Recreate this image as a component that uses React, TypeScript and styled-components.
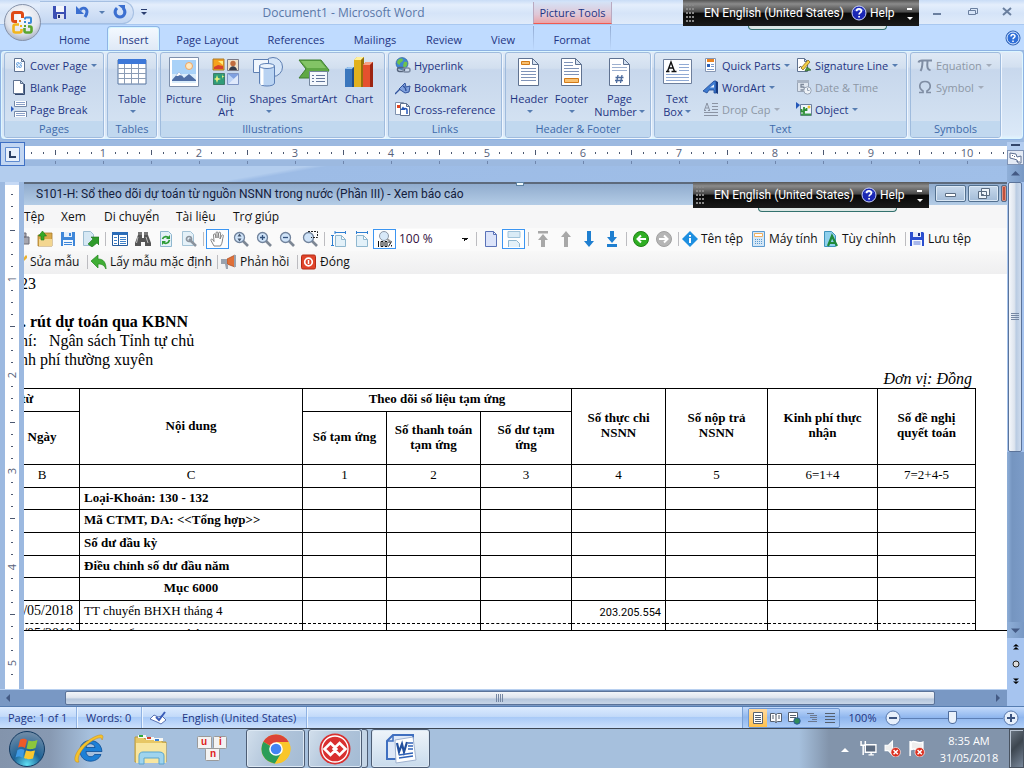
import React from "react";
import styled, { createGlobalStyle, css } from "styled-components";

const ui = `"Open Sans", "Noto Sans", sans-serif`;
const compact = `Roboto, "Open Sans", sans-serif`;
const serif = `"Liberation Serif", "Times New Roman", serif`;

const Global = createGlobalStyle`
  * { box-sizing: border-box; }
  body { margin: 0; font-family: ${ui}; font-size: 11px; color: #1e3583; }
  button { font: inherit; color: inherit; background: none; border: 0; padding: 0; margin: 0; }
  h1, h2, p { margin: 0; font-weight: normal; }
`;

/* ---------- shared parts ---------- */

const Page = styled.div`
  min-height: 100vh;
  display: flex;
  flex-direction: column;
  background: #9cb9e0;
  overflow: hidden;
`;

const Svg = styled.svg<{ $s?: number }>`
  display: block;
  flex: none;
  width: ${(p) => p.$s ?? 16}px;
  height: ${(p) => p.$s ?? 16}px;
`;

const Caret = styled.span<{ $dim?: boolean }>`
  flex: none;
  margin-left: 1px;
  border: 3px solid transparent;
  border-top-color: ${(p) => (p.$dim ? "#a3acba" : "#567db1")};
  border-bottom: 0;
`;

/* ---------- title bar ---------- */

const Header = styled.header`
  position: relative;
`;

const TitleBar = styled.div`
  height: 25px;
  display: flex;
  align-items: center;
  background: linear-gradient(#c9dcf6, #e4eefc 20%, #d5e4f8 55%, #e0ebfa);
  border-bottom: 1px solid #a9c8f0;
`;

const Quick = styled.div`
  margin-left: 40px;
  width: 94px;
  height: 23px;
  padding-left: 12px;
  display: flex;
  align-items: center;
  gap: 7px;
  border: 1px solid #a5bfe2;
  border-left: 0;
  border-radius: 0 12px 12px 0;
  background: linear-gradient(#dfeafa, #c4d7f2);
`;

const QuickMore = styled.button`
  width: 20px;
  display: flex;
  justify-content: center;
`;

const DocTitle = styled.h1`
  width: 379px;
  text-align: center;
  font-size: 12px;
  color: #5a78a8;
  white-space: nowrap;
`;

const ContextTitle = styled.div`
  width: 79px;
  height: 22px;
  align-self: flex-end;
  line-height: 22px;
  text-align: center;
  border: solid #b9a9c0;
  border-width: 0 1px;
  border-bottom: 1px solid #f05a50;
  background: linear-gradient(#d5e2f6, #dfc6d6 60%, #eaa4a8);
`;

const WindowButtons = styled.div`
  flex: 1;
  display: flex;
  justify-content: flex-end;
  gap: 19px;
  padding-right: 9px;
`;

const OfficeButton = styled.button`
  position: absolute;
  left: 3px;
  top: 3px;
  z-index: 2;
`;

const Lang = styled.div<{ $right: number }>`
  position: absolute;
  z-index: 3;
  top: 0;
  right: ${(p) => p.$right}px;
  width: 236px;
  height: 26px;
  padding: 0 1px 0 3px;
  display: flex;
  align-items: center;
  font-family: ${compact};
  font-size: 12px;
  color: #fff;
  white-space: nowrap;
  background: linear-gradient(#555 0, #8b8b8b 15%, #4b4b4b 45%, #080808 52%, #1a1a1a);
  &::after {
    content: "";
    position: absolute;
    top: 26px;
    left: 65px;
    width: 137px;
    height: 3px;
    border: 1px solid #33716e;
    border-top: 0;
    border-radius: 0 0 5px 5px;
    background: #dce6e4;
  }
`;

const Grip = styled.span`
  width: 9px;
  height: 18px;
  margin-right: 9px;
  background: radial-gradient(circle at 1px 1px, #888 1px, transparent 1px) 0 0 / 3px 4px;
`;

const LangName = styled.span`
  width: 147px;
`;

const LangHelp = styled.button`
  display: flex;
  align-items: center;
  gap: 3px;
  flex: 1;
`;

function LanguageBar({ right }: { right: number }) {
  return (
    <Lang $right={right}>
      <Grip />
      <LangName>EN English (United States)</LangName>
      <LangHelp>
        <Svg viewBox="0 0 16 16">
          <circle cx="8" cy="8" r="7" fill="#1a27b4" stroke="#cdd6ff" />
          <path d="M3 6c1-4 9-4 10 0z" fill="#6f8af0" opacity=".6" />
          <path d="M5.600 6.200C5.700 3.200 10.400 3.300 10.400 6c0 1.600-2.300 1.600-2.300 3.400M8.100 11v1.600" fill="none" stroke="#fff" strokeWidth="1.700" />
        </Svg>
        Help
      </LangHelp>
      <Svg viewBox="0 0 16 16">
        <path d="M5 3h5v2H5z M5 12h6L8 15z" fill="#fff" />
      </Svg>
    </Lang>
  );
}

/* ---------- ribbon tabs ---------- */

const Tabs = styled.nav`
  height: 25px;
  display: flex;
  align-items: flex-end;
  padding-left: 42px;
  background: #bfdbff;
`;

const Tab = styled.button<{ $w: number; $on?: boolean; $context?: boolean }>`
  width: ${(p) => p.$w}px;
  height: 24px;
  padding-top: 2px;
  border-radius: 4px 4px 0 0;
  white-space: nowrap;
  ${(p) =>
    p.$on &&
    css`
      border: 1px solid #8fb4e6;
      border-bottom: 0;
      box-shadow: inset 1px 1px 0 #d5f6ff, inset -1px 0 0 #d5f6ff;
      background: linear-gradient(#f4f9ff, #dfe9f6);
    `}
  ${(p) =>
    p.$context &&
    css`
      margin-left: 2px;
      border-radius: 0;
      border: solid;
      border-width: 0 1px;
      border-image: linear-gradient(#8fa8d0, #bfdbff) 1;
    `}
`;

const TabHelp = styled.button`
  margin-left: auto;
  align-self: center;
  padding-right: 3px;
`;

/* ---------- ribbon ---------- */

const Ribbon = styled.section`
  height: 90px;
  padding: 1px 3px 2px 3px;
  display: flex;
  gap: 3px;
  border: 1px solid #8db2e3;
  border-radius: 4px;
  background: linear-gradient(#e2ecf8, #d3e0f0 18%, #c8d8ed 20%, #dbe9f8 95%, #e2f5ff);
  box-shadow: inset 0 0 0 1px #dcf6ff;
  overflow: hidden;
`;

const Group = styled.section<{ $w: number }>`
  flex: none;
  width: ${(p) => p.$w}px;
  height: 86px;
  display: flex;
  flex-direction: column;
  border: 1px solid #9fbbdd;
  border-radius: 3px;
  box-shadow: 1px 1px 0 #eff6ff;
  background: linear-gradient(#dfe9f5, #d2dfef 18%, #c7d7ec 20%, #d6e4f3);
`;

const GroupBody = styled.div`
  flex: 1;
  display: flex;
  padding: 1px 1px 0;
`;

const GroupName = styled.h2`
  height: 16px;
  line-height: 15px;
  font-size: 11px;
  text-align: center;
  color: #3e6aaa;
  background: #c1d8ef;
  border-radius: 0 0 2px 2px;
`;

const Stack = styled.div<{ $w?: number }>`
  padding-left: 5px;
  width: ${(p) => (p.$w ? `${p.$w}px` : "auto")};
`;

const SmallButton = styled.button<{ $dim?: boolean }>`
  height: 22px;
  display: flex;
  align-items: center;
  gap: 3px;
  white-space: nowrap;
  color: ${(p) => (p.$dim ? "#8d97a5" : "inherit")};
`;

const LargeButton = styled.button<{ $w: number }>`
  width: ${(p) => p.$w}px;
  height: 66px;
  display: flex;
  flex-direction: column;
  align-items: center;
  padding-top: 2px;
  line-height: 13px;
  white-space: nowrap;
  > svg {
    margin-bottom: 4px;
  }
`;

const SecondLine = styled.span`
  height: 13px;
  display: flex;
  align-items: center;
  gap: 1px;
`;

type SmallProps = { icon: React.ReactNode; label: string; menu?: boolean; dim?: boolean };
function Small({ icon, label, menu, dim }: SmallProps) {
  return (
    <SmallButton $dim={dim}>
      <Svg viewBox="0 0 16 16">{icon}</Svg>
      {label}
      {menu && <Caret $dim={dim} />}
    </SmallButton>
  );
}

type LargeProps = { icon: React.ReactNode; label: string; second?: string; menu?: boolean; w: number };
function Large({ icon, label, second, menu, w }: LargeProps) {
  return (
    <LargeButton $w={w}>
      <Svg $s={32} viewBox="0 0 32 32">{icon}</Svg>
      <span>{label}</span>
      <SecondLine>
        {second}
        {menu && <Caret />}
      </SecondLine>
    </LargeButton>
  );
}

/* ---------- ribbon drawings ---------- */

const sheet = (x: number, y: number, w: number, h: number, f: number) => (
  <path
    d={`M${x} ${y}h${w - f}l${f} ${f}v${h - f}h${-w}z M${x + w - f} ${y}v${f}h${f}`}
    fill="#fff"
    stroke="#5f7291"
  />
);

const ic = {
  cover: (
    <>
      {sheet(3.5, 1.5, 10, 13, 3)}
      <path d="M5 5h6v6H5z" fill="#8cb8e6" />
      <path d="M5 5l6 6M8 5l3 3M5 8l3 3M11 5l-6 6" stroke="#dcebfb" />
    </>
  ),
  blank: (
    <>
      {sheet(2.5, 1.5, 10, 13, 3)}
      <path d="M13.500 5v10.500H4" fill="none" stroke="#33486e" />
    </>
  ),
  pageBreak: (
    <>
      <path d="M3.500 0v5.500h12V0M3.500 16v-5.500h12V16" fill="#fff" stroke="#7488a8" />
      <path d="M5 1.500h9M5 3.500h9M5 12.500h9M5 14.500h9" stroke="#8aa0c8" />
      <path d="M0 5l3 3-3 3z" fill="#2c5cc0" />
    </>
  ),
  table: (
    <>
      <path d="M2 4h28v24H2z" fill="#fff" stroke="#56749f" />
      <path d="M2 3h28v5H2z" fill="#3d78d8" />
      <path d="M2 12.500h28M2 17.500h28M2 22.500h28M8.500 8v20M15.500 8v20M22.500 8v20" stroke="#8b9cb5" />
    </>
  ),
  picture: (
    <>
      <path d="M1.500 1.500h29v29h-29z" fill="#fff" stroke="#7e90ac" />
      <path d="M4 4h24v23H4z" fill="#a9d2f8" />
      <path d="M4 18h24v9H4z" fill="#d9ecfb" />
      <circle cx="21" cy="10" r="3.500" fill="#ffe9c0" stroke="#f0a460" />
      <path d="M4 24l7-8 5 6 5-4 7 6v1H4z" fill="#4f6fa6" />
      <path d="M8 20l3-4 3 4-2-1-2 1z" fill="#fff" />
    </>
  ),
  clip: (
    <>
      <path d="M3 3h11v11H3z" fill="#f6a21c" stroke="#ad7b28" />
      <path d="M4 11l4-2 5 1v3H4z" fill="#d6412c" />
      <path d="M8 5h5v4z" fill="#ffec7a" />
      <path d="M17.500 3.500h11v11h-11z" fill="#efe1c8" stroke="#7b7b88" />
      <circle cx="23" cy="7.500" r="2.700" fill="#c06d3f" />
      <path d="M19 14c1-5 7-5 8 0z" fill="#343c4c" />
      <path d="M3.500 17.500h11v11h-11z" fill="#2f9c78" stroke="#3f7c68" />
      <path d="M7 19l1 3 3 1-3 1-1 3-1-3-2-1 2-1zM12 18l.6 2 2 .6-2 .6-.6 2z" fill="#e8f07c" />
      <path d="M17.500 17.500h11v11h-11z" fill="#bcd2f6" stroke="#7f95c4" />
      <path d="M18 18l6 5-6 5h10V18z" fill="#7fa0e0" />
      <path d="M18 28l10-9v9z" fill="#dfe9fb" />
    </>
  ),
  shapes: (
    <>
      <circle cx="21" cy="11" r="9.500" fill="#d5e5f8" stroke="#5e7fb2" />
      <path d="M1.500 3.500h15v13h-15z" fill="#f0f6fd" stroke="#5e7fb2" />
      <path d="M7.500 10v17c0 4 15 4 15 0V10z" fill="#b9d3f2" stroke="#5c7fb5" />
      <path d="M10 12v17" stroke="#fff" strokeWidth="3" />
      <ellipse cx="15" cy="10" rx="7.500" ry="2.500" fill="#eaf3fd" stroke="#5c7fb5" />
    </>
  ),
  smart: (
    <>
      <path d="M1 4h22l8 10-5 8H1l7-9z" fill="#5fa845" stroke="#3f7f31" />
      <path d="M3 5h19l6 7H9z" fill="#83c466" />
      <path d="M11.500 15.500h18v14h-18z" fill="#f4f8fd" stroke="#75879f" />
      <path d="M14 19.500h2M18 19.500h9M14 22.500h2M18 22.500h9M14 25.500h2M18 25.500h9" stroke="#62769a" />
    </>
  ),
  chart: (
    <>
      <path d="M2 13l3-2h6v20H2z" fill="#3a76bd" />
      <path d="M2 13l3-2h6l-2 2z" fill="#9cc6f0" />
      <path d="M9 13l2-2v20H9z" fill="#224e86" />
      <path d="M11 4l3-3h7v30H11z" fill="#e2b11e" />
      <path d="M11 4l3-3h7l-3 3z" fill="#fff09a" />
      <path d="M18 4l3-3v30h-3z" fill="#94700c" />
      <path d="M20 9l3-3h7v25H20z" fill="#e5502e" />
      <path d="M20 9l3-3h7l-3 3z" fill="#f9a083" />
      <path d="M27 9l3-3v25h-3z" fill="#9c2411" />
    </>
  ),
  link: (
    <>
      <circle cx="7" cy="6.500" r="6" fill="#3f86d2" stroke="#2b5d92" strokeWidth=".6" />
      <path d="M3 3c2-2 5-2 5 0s-3 2-3 4-3 0-3-2zM9 5c3-1 4 0 3 3s-3 3-4 1z" fill="#6fc24b" />
      <rect x="2.500" y="10.500" width="7" height="4" rx="2" fill="none" stroke="#56657c" strokeWidth="1.500" />
      <rect x="8" y="11" width="7" height="4" rx="2" fill="none" stroke="#7c8ba2" strokeWidth="1.500" />
    </>
  ),
  bookmark: (
    <>
      <path d="M4 10l6-6 1 4 4-1-1 6-4 1-3-2z" fill="#7fa0dd" stroke="#31539c" />
      <path d="M0 15l5-5M8 7c2 1 3 3 3 5" stroke="#31539c" strokeWidth="1.300" fill="none" />
    </>
  ),
  cross: (
    <>
      <path d="M.5 1.500h8v12h-8z" fill="#fff" stroke="#8092ae" />
      <path d="M2 4h3v3H2z" fill="#e04420" />
      {sheet(5.5, 2.5, 9, 12, 3)}
      <path d="M12 13V9c0-2-4-2-4 0" stroke="#2457b8" fill="none" strokeWidth="1.500" />
      <path d="M5.500 9h5L8 5.500z" fill="#2457b8" />
    </>
  ),
  headerPage: (
    <>
      {sheet(5.5, 2.5, 20, 27, 6)}
      <path d="M8.500 5.500h8v3h-8z" fill="#f8c070" stroke="#d27a18" />
      <path d="M8 12.500h15M8 15.500h15M8 18.500h15M8 21.500h15M8 24.500h15" stroke="#7f93b8" />
    </>
  ),
  footerPage: (
    <>
      {sheet(5.5, 2.5, 20, 27, 6)}
      <path d="M8 6.500h9M8 9.500h9M8 12.500h15M8 15.500h15M8 18.500h15" stroke="#7f93b8" />
      <path d="M8.500 22.500h14v4h-14z" fill="#f8c070" stroke="#d27a18" />
    </>
  ),
  numberPage: (
    <>
      {sheet(5.5, 2.5, 20, 27, 6)}
      <path d="M8 8.500h9M8 11.500h15M8 14.500h15" stroke="#9db0cf" />
      <path d="M14 19l-1.500 8M18 19l-1.500 8M11.500 21.500h8M11 24.500h8" stroke="#4b6a9c" strokeWidth="1.300" />
    </>
  ),
  textBox: (
    <>
      <path d="M2.500 3.500h28v24h-28z" fill="#fdfeff" stroke="#6d7f9d" />
      <path d="M18 8.500h10M18 11.500h10M18 14.500h10M5 18.500h23M5 21.500h23M5 24.500h23" stroke="#8fa9d4" />
      <path d="M5 15.500h3.500M10.500 15.500h5M6.500 15.500L10 6l3.500 9.500M8 12h4.500" stroke="#111" fill="none" strokeWidth="1.400" />
    </>
  ),
  quick: (
    <>
      <path d="M2.500 1.500h10v13h-10z" fill="#fff" stroke="#8696b2" />
      <path d="M4 2h7v3H4z" fill="#e88424" />
      <path d="M4 7h3v3H4z" fill="#2a5fb4" />
      <path d="M8 7.500h3M8 9.500h3M4 12.500h7" stroke="#7c9cd0" />
    </>
  ),
  wordArt: (
    <>
      <path d="M0 12L11 2h2v12h-2v-3H6l-2 3z" fill="#3d7bd0" stroke="#1c4796" strokeWidth=".8" />
      <path d="M7 8.500l4-3v3z" fill="#e8f1fd" />
      <path d="M13 2l2 1v12l-2-1z" fill="#163a80" />
    </>
  ),
  dropCap: (
    <>
      <path d="M1 9.500h2M5 9.500h2M1.500 9L4 2l2.500 7M2.500 7h3" stroke="#8a93a3" fill="none" />
      <path d="M9 2.500h6M9 5.500h6M9 8.500h6M1 11.500h14M1 14.500h14" stroke="#8a93a3" />
    </>
  ),
  sign: (
    <>
      {sheet(1.5, 1.5, 10, 13, 3)}
      <path d="M3 11c2-4 3 2 5-1" fill="none" stroke="#333" />
      <path d="M5 11l7-8 2 2-7 8z" fill="#f3cf45" stroke="#806010" strokeWidth=".7" />
      <path d="M9 14l2-4 4 3z" fill="#4b9b39" stroke="#2b5f22" strokeWidth=".7" />
    </>
  ),
  date: (
    <>
      <path d="M1.500 1.500h11v11h-11z" fill="#dfe6ef" stroke="#98a4b6" />
      <path d="M1 1h12v3H1z" fill="#a9b4c4" />
      <path d="M8 5.500H5V8h2c2 0 2 3 0 3H4.500" stroke="#7c889a" fill="none" strokeWidth="1.300" />
      <circle cx="11.500" cy="11.500" r="3.700" fill="#eef2f7" stroke="#98a4b6" />
      <path d="M11.500 9v2.500h2" stroke="#98a4b6" fill="none" />
    </>
  ),
  object: (
    <>
      <path d="M4.500 3.500h11v11h-11z" fill="#eef4fc" stroke="#6c7f9e" />
      <path d="M0 1l4 3-4 4z" fill="#2457b8" />
      <path d="M8 14V6M5.500 8v2.500H8M10.500 7v2H8" stroke="#2f8e35" fill="none" strokeWidth="1.800" />
      <circle cx="13" cy="6" r="1.500" fill="#f0c233" />
      <path d="M5 12.500h10v2H5z" fill="#3c9a4a" />
    </>
  ),
  pi: <path d="M1.500 5.500C2 3.500 3 3.500 5 3.500h10M5.500 4c0 4 0 7-2 10M10.500 4c-.5 5-.5 9 3 9" fill="none" stroke="#7f8da3" strokeWidth="2" />,
  omega: <path d="M2 13.500h4v-1.500C1 9 2 2.500 8 2.500S15 9 10 12v1.500h4" fill="none" stroke="#7f8da3" strokeWidth="1.700" />,
};

/* ---------- document area ---------- */

const Work = styled.main`
  flex: 1;
  display: flex;
  padding-top: 2px;
  background: #9cb9e0;
`;

const DocColumn = styled.div`
  flex: 1;
  min-width: 0;
  display: flex;
  flex-direction: column;
`;

const RulerRow = styled.div`
  height: 24px;
  display: flex;
`;

const TabStop = styled.button`
  flex: none;
  width: 25px;
  height: 24px;
  display: grid;
  place-items: center;
  border: 1px solid #3f70c4;
  background: #c2d6f2;
`;

const HRuler = styled.div`
  flex: 1;
  min-width: 0;
  height: 22px;
  margin-top: 4px;
  display: flex;
  background: linear-gradient(#fff 13px, #c5d9f5 13px, transparent 14px);
  color: #55617a;
  line-height: 13px;
  overflow: hidden;
`;

const VRuler = styled.div`
  flex: none;
  width: 14px;
  margin: 0 5px;
  padding-top: 4px;
  height: 507px;
  overflow: hidden;
  background: #fff;
  border-top: 3px solid #c5d9f5;
  color: #55617a;
`;

const Mark = styled.span<{ $kind: "dot" | "half" | "num"; $down?: boolean }>`
  position: relative;
  flex: none;
  width: ${(p) => (p.$down ? 14 : 12)}px;
  height: ${(p) => (p.$down ? 12 : 13)}px;
  display: flex;
  align-items: center;
  justify-content: center;
  font-size: 11px;
  line-height: 12px;
  ${(p) => p.$down && "transform: rotate(-90deg);"}
  ${(p) =>
    p.$kind !== "num" &&
    css`
      &::before {
        content: "";
        width: 1px;
        height: ${p.$kind === "half" ? 5 : 2}px;
        background: #4c5870;
      }
    `}
  ${(p) =>
    !p.$down &&
    p.$kind !== "dot" &&
    css`
      &::after {
        content: "";
        position: absolute;
        top: 15px;
        left: 6px;
        width: 1px;
        height: 3px;
        background: #6f86ad;
      }
    `}
`;

function marks(first: number, count: number, down?: boolean) {
  return Array.from({ length: count }, (_, i) => {
    const n = i + first;
    const kind = n % 8 === 0 ? "num" : n % 4 === 0 ? "half" : "dot";
    return (
      <Mark key={n} $kind={kind} $down={down}>
        {kind === "num" ? n / 8 : null}
      </Mark>
    );
  });
}

const Gap = styled.div`
  height: 16px;
  background: linear-gradient(170deg, #b3cdee 0 28%, #9dbce6 30%, #a0bfe8);
`;

const PageRow = styled.div`
  flex: 1;
  display: flex;
`;

const Paper = styled.div`
  position: relative;
  flex: 1;
  min-width: 0;
  background: #fff;
`;

const Handle = styled.span`
  position: absolute;
  left: 50%;
  top: 0;
  width: 8px;
  height: 4px;
  border: 1px solid #5f83a4;
  background: #eef8fb;
`;

const Report = styled.section`
  height: 449px;
  overflow: hidden;
  border-top: 2px solid #5d6a7c;
  border-bottom: 1px solid #000;
  color: #111;
  font-size: 12px;
`;

const ReportTitle = styled.div`
  height: 21px;
  padding-left: 12px;
  display: flex;
  background: linear-gradient(#90acce, #b4cce6);
  font-family: ${compact};
  line-height: 20px;
  color: #14203c;
  white-space: nowrap;
`;

const ReportWindowButtons = styled.div`
  margin-left: auto;
  display: flex;
  gap: 2px;
`;

const FrameButton = styled.button<{ $w: number; $red?: boolean }>`
  width: ${(p) => p.$w}px;
  height: 17px;
  margin-top: 1px;
  display: grid;
  place-items: center;
  border: 1px solid #53708f;
  border-radius: 2px;
  background: ${(p) => (p.$red ? "#c0503c" : "linear-gradient(#c8d9ec, #a3bcd8)")};
  box-shadow: inset 0 0 0 1px ${(p) => (p.$red ? "#dc9080" : "#dbe8f5")};
`;

const MenuBar = styled.nav`
  height: 23px;
  display: flex;
  align-items: center;
  background: #f6f6f7;
`;

const MenuItem = styled.button<{ $w: number }>`
  width: ${(p) => p.$w}px;
  text-align: left;
  white-space: nowrap;
`;

const ToolRow = styled.div<{ $end?: boolean }>`
  height: 23px;
  padding-bottom: 2px;
  margin-left: -14px;
  display: flex;
  align-items: center;
  background: ${(p) => (p.$end ? "linear-gradient(#f8f8f8, #efeff0)" : "#fafafa")};
`;

const Tool = styled.button<{ $on?: boolean }>`
  flex: none;
  width: 23px;
  height: 20px;
  display: grid;
  place-items: center;
  ${(p) => p.$on && "border: 1px solid #3b95f2; background: #fdfeff;"}
`;

const LabelTool = styled.button<{ $w: number }>`
  flex: none;
  width: ${(p) => p.$w}px;
  display: flex;
  align-items: center;
  gap: 3px;
  padding-left: 1px;
  white-space: nowrap;
`;

const Divider = styled.span`
  flex: none;
  width: 6px;
  height: 14px;
  display: flex;
  justify-content: center;
  &::before {
    content: "";
    width: 1px;
    background: #bcbcc0;
  }
`;

const ZoomSelect = styled.select`
  flex: none;
  width: 74px;
  height: 20px;
  margin-right: 3px;
  padding: 0 0 0 3px;
  border: 0;
  appearance: none;
  font: inherit;
  color: #331040;
  background: linear-gradient(45deg, transparent 50%, #111 50%) 66px 9px / 3px 3px no-repeat,
    linear-gradient(-45deg, transparent 50%, #111 50%) 69px 9px / 3px 3px no-repeat, #fff;
`;

const ReportPaper = styled.div`
  height: 360px;
  margin-left: -4px;
  background: #fff;
  color: #000;
  font-family: ${serif};
  font-size: 16px;
  line-height: 19px;
  overflow: hidden;
`;

const Line = styled.p`
  height: 19px;
  white-space: pre;
`;

const BoldLine = styled(Line)`
  padding-left: 2px;
  font-weight: bold;
`;

const UnitLine = styled(Line)`
  width: 952px;
  text-align: right;
  font-style: italic;
`;

const Ledger = styled.table`
  width: 1043px;
  margin-left: -87px;
  table-layout: fixed;
  border-collapse: collapse;
  font-size: 13px;
  line-height: 15px;
  th, td {
    padding: 0 4px 3px;
    border: 1px solid #000;
    text-align: center;
  }
`;

const Row = styled.tr<{ $h: number; $dotted?: boolean }>`
  height: ${(p) => p.$h}px;
  ${(p) => p.$dotted && "td { border-top: 1px dashed #000; border-bottom: 1px dashed #000; }"}
`;

const TextCell = styled.td<{ $bold?: boolean; $center?: boolean }>`
  &&& {
    text-align: ${(p) => (p.$center ? "center" : "left")};
  }
  font-weight: ${(p) => (p.$bold ? "bold" : "normal")};
`;

const NumberCell = styled.td`
  &&& {
    padding-bottom: 0;
    text-align: right;
  }
  font-family: ${compact};
  font-size: 11px;
`;

const DateCell = styled.td`
  &&& {
    padding-right: 6px;
    text-align: right;
  }
  font-size: 14px;
`;

/* ---------- report toolbar drawings ---------- */

const lens = (inner: React.ReactNode) => (
  <>
    <path d="M10 10l5 5" stroke="#7d8794" strokeWidth="2.600" />
    <circle cx="6.500" cy="6.500" r="5" fill="#cfe3f8" stroke="#71839c" strokeWidth="1.300" />
    {inner}
  </>
);
const lightPage = (
  <path d="M4.500 4.500h6l4 4v7h-10z M10.500 4.500v4h4" fill="#e3f1f9" stroke="#8fb7cf" />
);
const arrow = (color: string, d: string) => <path d={d} fill={color} />;

const tools: (React.ReactNode | "|" | "zoom")[] = [
  <path d="M1 6h14v7H1zM3 2h9v4H3z" fill="#a5a5ae" stroke="#6c6c78" />,
  <>
    <path d="M1 4h5l1-2h8v13H1z" fill="#d9a94a" stroke="#a87c2c" strokeWidth=".8" />
    <path d="M2 8h13v7H2z" fill="#f3d690" />
    <path d="M4 9V5H1.500L5.500 0l4 5H7v4z" fill="#35a825" stroke="#1e7514" strokeWidth=".6" />
  </>,
  <>
    <path d="M1 1h14v14H1z" fill="#3f87d9" />
    <path d="M4 1h8v5H4z" fill="#e5f0fb" />
    <path d="M3 9h10v6H3z" fill="#f2f8fe" />
    <path d="M9 2h2v3H9zM4 11h8v1H4zM4 13h8v1H4z" fill="#3f87d9" />
  </>,
  <>
    <path d="M.5 .5h7l3 3v11H.5z" fill="#d6e8f4" stroke="#9dbdd2" />
    <path d="M5 13l5-5-2-2h8v8l-2-2-5 4z" fill="#2f9c2b" stroke="#1b7019" strokeWidth=".6" />
  </>,
  "|",
  <>
    <path d="M.5 1.500h15v13H.5z" fill="#fff" stroke="#245a9c" />
    <path d="M0 1h16v3H0z" fill="#2b6cb8" />
    <path d="M6.500 4v11" stroke="#245a9c" />
    <path d="M2 6.500h3M2 9.500h3M2 12.500h3M8 6.500h6M8 8.500h6M8 10.500h6M8 12.500h6" stroke="#3f80c8" />
  </>,
  <>
    <path d="M3 1h4v3H3zM9 1h4v3H9z" fill="#777" />
    <path d="M3 4h4v3h2V4h4l3 8v3h-6v-4H6v4H0v-3z" fill="#555" />
    <path d="M3 6l-1.500 6M11 6l2 6" stroke="#bbb" />
  </>,
  <>
    <path d="M2.500 .5h8l3 3v12h-11z" fill="#e5f1f8" stroke="#8fb7cf" />
    <path d="M4.500 8c1-3 5-3 6-1M11.500 9c-1 4-5 4-6 2" fill="none" stroke="#2e9c36" strokeWidth="1.700" />
    <path d="M12 4v4H8zM4 14v-4h4z" fill="#2e9c36" />
  </>,
  <>
    <path d="M1.500 .5h8l3 3v11h-11z" fill="#e5f1f8" stroke="#a4c3d6" />
    <path d="M8 8l7 7" stroke="#8b939d" strokeWidth="2.500" />
    <circle cx="8" cy="8" r="2.500" fill="none" stroke="#8b939d" strokeWidth="1.700" />
  </>,
  "|",
  <path d="M4 15L1 9.500C.5 8 2 7.500 3 9l1 1.500L3.500 4c0-1.500 1.800-1.500 2 0l.5 3V2c0-1.500 2-1.500 2 0v5l.7-5c.2-1.300 2-1 1.900.2L10 8l1.600-3.500c.6-1.200 2.200-.5 1.700.8C12 9 13 11 10.500 15z" fill="#fff" stroke="#777" strokeWidth=".9" />,
  lens(<path d="M6.500 2.500l2 3h-4zM6.500 10.500l2-3h-4z" fill="#44566e" />),
  lens(<path d="M4 6.500h5M6.500 4v5" stroke="#33527d" strokeWidth="1.300" />),
  lens(<path d="M4 6.500h5" stroke="#33527d" strokeWidth="1.300" />),
  lens(<path d="M6 .5h9.500v6H9" fill="none" stroke="#222" strokeDasharray="2 1" />),
  "|",
  <>
    {lightPage}
    <path d="M4 1.500h11M1.500 4v11M4 0v3M14.500 0v3M0 4.500h3M0 14.500h3" stroke="#2e7fd2" />
  </>,
  <>
    <path d="M2.500 4.500h7l4 4v7h-11z M9.500 4.500v4h4" fill="#e3f1f9" stroke="#8fb7cf" />
    <path d="M2 1.500h12M2.500 0v3M13.500 0v3" stroke="#2e7fd2" />
  </>,
  <>
    <path d="M10 8l4 3" stroke="#999" strokeWidth="2" />
    <circle cx="7" cy="5" r="4.500" fill="#d8e9f9" stroke="#8c97a6" />
    <path d="M1.500 10v6M4 10.500h2v5H4zM8 10.500h2v5H8zM11.500 15.500l3-5M12 10.500v1.500M14.500 14v1.500" stroke="#111" fill="none" />
  </>,
  "zoom",
  "|",
  <path d="M2.500 .5h8l3 3v12h-11z M10.500 .5v3h3" fill="#dce4fa" stroke="#5a72b8" />,
  <>
    <path d="M2 .5h12v6H2z" fill="#d9ebf6" stroke="#a0c3da" />
    <path d="M2.500 16V9.500h8l3 3V16" fill="#e3f1f9" stroke="#8fb7cf" />
  </>,
  "|",
  arrow("#a8a8a8", "M3 0h10v2.500H3zM8 3l5 6h-3v7H6V9H3z"),
  arrow("#a8a8a8", "M8 0l5 6h-3v10H6V6H3z"),
  arrow("#1f7fd0", "M8 16l5-6h-3V0H6v10H3z"),
  arrow("#1f7fd0", "M8 12l5-6h-3V0H6v6H3zM3 13h10v3H3z"),
  "|",
  <>
    <circle cx="8" cy="8" r="7.500" fill="#2fae23" stroke="#1e8015" />
    <path d="M13 8H5M8 4.500L4.500 8 8 11.500" stroke="#fff" strokeWidth="2" fill="none" />
  </>,
  <>
    <circle cx="8" cy="8" r="7.500" fill="#b5b5b5" stroke="#a0a0a0" />
    <path d="M3 8h8M8 4.500l3.500 3.500L8 11.500" stroke="#fff" strokeWidth="2" fill="none" />
  </>,
  "|",
];

const info = (
  <>
    <path d="M8 0l8 8-8 8-8-8z" fill="#1e8fe0" />
    <path d="M8 4v1.800M8 7v5" stroke="#fff" strokeWidth="2" />
  </>
);
const calc = (
  <>
    <path d="M2.500 .5h12v15h-12z" fill="#d5e7f6" stroke="#5b9ad0" />
    <path d="M4.500 2.500h8v3h-8z" fill="#fff" stroke="#f0b060" />
    <path d="M5 8.500h8M5 10.500h8M5 12.500h8" stroke="#5b9ad0" strokeDasharray="1 1" />
  </>
);
const custom = (
  <>
    <path d="M1.500 .5h7l4 4v11h-11z" fill="#8fd0ec" stroke="#3f94bc" />
    <path d="M5 15L9 5l5 10M7 12h5" fill="none" stroke="#1f8a3a" strokeWidth="2.200" />
  </>
);
const floppy = (
  <>
    <path d="M1 1h13l1 1v13H1z" fill="#2b4fd0" />
    <path d="M4 1h8v5H4z" fill="#e7edfb" />
    <path d="M3 9h10v6H3z" fill="#f6f8fe" />
    <path d="M4.500 11h7M4.500 13h7" stroke="#5a78d8" />
    <path d="M9 2h2v3H9z" fill="#1b2f86" />
  </>
);
const pencil = <path d="M3 14L15 1l2 2L6 14z" fill="#e8b030" />;
const back = <path d="M0 7l7-6v4c6 0 8 4 8 10-2-4-4-5-8-5v4z" fill="#3fae35" stroke="#23851c" strokeWidth=".7" />;
const horn = (
  <>
    <path d="M6 5l8-4v12l-8-3z" fill="#e07038" stroke="#a8481c" strokeWidth=".7" />
    <path d="M14 1v12" stroke="#9aa2ae" strokeWidth="2" />
    <path d="M0 5h6v5H0zM4 10h3v5H5z" fill="#9aa2ae" />
  </>
);
const power = (
  <>
    <rect x=".5" y="1" width="14" height="14" rx="1.500" fill="#e0442a" stroke="#b42a14" />
    <circle cx="7.500" cy="8" r="3.800" fill="none" stroke="#fff" strokeWidth="1.700" />
    <path d="M7.500 6v4" stroke="#fff" strokeWidth="1.500" />
  </>
);

function Labelled({ icon, label, w }: { icon: React.ReactNode; label: string; w: number }) {
  return (
    <LabelTool $w={w}>
      <Svg viewBox="0 0 16 16">{icon}</Svg>
      {label}
    </LabelTool>
  );
}

const ledgerRows: { label: string; center?: boolean; h: number }[] = [
  { label: "Loại-Khoản: 130 - 132", h: 22 },
  { label: "Mã CTMT, DA: <<Tổng hợp>>", h: 23 },
  { label: "Số dư đầu kỳ", h: 23 },
  { label: "Điều chỉnh số dư đầu năm", h: 22 },
  { label: "Mục 6000", center: true, h: 23 },
];

const columnWidths = [71, 75, 223, 84, 94, 91, 94, 102, 110, 98];

const Blank = ({ n }: { n: number }) => (
  <>
    {Array.from({ length: n }, (_, i) => (
      <td key={i} />
    ))}
  </>
);

function LedgerTable() {
  return (
    <Ledger>
      <colgroup>
        {columnWidths.map((w, i) => (
          <col key={i} width={w} />
        ))}
      </colgroup>
      <thead>
        <Row $h={23}>
          <th colSpan={2}>Chứng từ</th>
          <th rowSpan={2}>Nội dung</th>
          <th colSpan={3}>Theo dõi số liệu tạm ứng</th>
          <th rowSpan={2}>Số thực chi<br />NSNN</th>
          <th rowSpan={2}>Số nộp trả<br />NSNN</th>
          <th rowSpan={2}>Kinh phí thực<br />nhận</th>
          <th rowSpan={2}>Số đề nghị<br />quyết toán</th>
        </Row>
        <Row $h={53}>
          <th />
          <th>Ngày</th>
          <th>Số tạm ứng</th>
          <th>Số thanh toán<br />tạm ứng</th>
          <th>Số dư tạm<br />ứng</th>
        </Row>
      </thead>
      <tbody>
        <Row $h={23}>
          <td />
          {["B", "C", "1", "2", "3", "4", "5", "6=1+4", "7=2+4-5"].map((t) => (
            <td key={t}>{t}</td>
          ))}
        </Row>
        {ledgerRows.map((r) => (
          <Row key={r.label} $h={r.h}>
            <Blank n={2} />
            <TextCell $bold $center={r.center}>{r.label}</TextCell>
            <Blank n={7} />
          </Row>
        ))}
        {["203.205.554", "28.181.948"].map((sum) => (
          <Row key={sum} $h={23} $dotted>
            <td />
            <DateCell>31/05/2018</DateCell>
            <TextCell>TT chuyển BHXH tháng 4</TextCell>
            <Blank n={3} />
            <NumberCell>{sum}</NumberCell>
            <Blank n={3} />
          </Row>
        ))}
      </tbody>
    </Ledger>
  );
}

/* ---------- scroll bars ---------- */

const SideScroll = styled.aside`
  flex: none;
  width: 17px;
  padding-bottom: 17px;
  display: flex;
  flex-direction: column;
  align-items: stretch;
  background: #a6c4ef;
`;

const SplitBox = styled.span`
  height: 8px;
  border: solid #b4cdf0;
  border-width: 2px 4px 4px;
  background: #33466b;
`;

const SideButton = styled.button<{ $h: number; $track?: boolean; $framed?: boolean }>`
  flex: none;
  height: ${(p) => p.$h}px;
  display: grid;
  place-items: center;
  background: ${(p) => (p.$track ? "linear-gradient(90deg, #8fafd8, #7898c4)" : "transparent")};
  ${(p) => p.$framed && "border: 1px solid #7f93b5; background: #e3eaf5;"}
`;

const SideThumb = styled.div`
  flex: none;
  height: 270px;
  margin-right: 2px;
  margin-left: 1px;
  display: grid;
  place-items: center;
  border: 1px solid #5b7399;
  border-radius: 2px;
  background: linear-gradient(90deg, #f4f7fb, #dde4ee 45%, #b9cbe2 60%, #cfdcee);
`;

const SideTrack = styled.div`
  flex: 1;
  background: linear-gradient(90deg, #8fafd8, #7595c0 30%, #7c9cc8);
`;

const BottomScroll = styled.div`
  height: 17px;
  display: flex;
  align-items: center;
  padding: 1px 0 2px;
  background: #7998c4;
  border-top: 1px solid #b8d0f0;
`;

const BottomArrow = styled.button<{ $w: number }>`
  flex: none;
  width: ${(p) => p.$w}px;
  padding: 0 5px;
  display: flex;
  justify-content: ${(p) => (p.$w > 65 ? "flex-end" : "flex-start")};
`;

const BottomThumb = styled.div`
  flex: 1;
  height: 14px;
  display: grid;
  place-items: center;
  border: 1px solid #5b7399;
  border-radius: 2px;
  background: linear-gradient(#f2f5f9, #dfe5ee 45%, #b5c6dc 60%, #c8d6e8);
`;

/* ---------- status bar ---------- */

const Status = styled.footer`
  height: 22px;
  display: flex;
  align-items: stretch;
  border-top: 1px solid #567db1;
  background: linear-gradient(#dcebff, #c3daf9 45%, #a9caf7 50%, #cbe0fc);
  line-height: 20px;
`;

const StatusCell = styled.div<{ $w: number; $pad: number }>`
  flex: none;
  width: ${(p) => p.$w}px;
  padding-left: ${(p) => p.$pad}px;
  display: flex;
  align-items: center;
  gap: 16px;
  border-right: 1px solid #8fb2e3;
  box-shadow: 1px 0 0 #eaf4ff;
  white-space: nowrap;
`;

const StatusRight = styled.div`
  margin-left: auto;
  display: flex;
  align-items: center;
  padding: 0 5px;
  border-left: 1px solid #7ba0d4;
  background: linear-gradient(#c3dafb, #8fb6ee 50%, #b0cff8);
`;

const Views = styled.div`
  display: flex;
  border: 1px solid #6f97d0;
  border-radius: 2px;
`;

const ViewButton = styled.button<{ $on?: boolean }>`
  width: 18px;
  height: 18px;
  display: grid;
  place-items: center;
  background: ${(p) => (p.$on ? "linear-gradient(#ffd9a0, #ffc14d)" : "none")};
`;

const ZoomLabel = styled.button`
  width: 45px;
`;

const ZoomRange = styled.input`
  width: 102px;
  height: 16px;
  margin: 0;
  appearance: none;
  background: linear-gradient(#5d7fb5, #5d7fb5) 0 8px / 100% 1px no-repeat;
  &::-webkit-slider-thumb {
    appearance: none;
    width: 9px;
    height: 13px;
    border: 1px solid #4e6c9c;
    border-radius: 1px 1px 5px 5px;
    background: #e9f1fb;
  }
`;

/* ---------- task bar ---------- */

const TaskBar = styled.footer`
  height: 40px;
  display: flex;
  align-items: center;
  border-top: 1px solid #3c4654;
  background: linear-gradient(90deg, #8394ac, #8799b2 50px, #a6c0dd 90px, #a6c0dd calc(100% - 225px), #8294ab calc(100% - 195px), #8294ab);
`;

const Launcher = styled.button<{ $w: number }>`
  flex: none;
  width: ${(p) => p.$w}px;
  height: 39px;
  display: grid;
  place-items: center;
`;

const TaskButton = styled.button<{ $w: number; $active?: boolean }>`
  flex: none;
  width: ${(p) => p.$w}px;
  height: 39px;
  display: grid;
  place-items: center;
  border: 1px solid #4d5d74;
  border-radius: 3px;
  box-shadow: inset 0 0 0 1px #dce8f4;
  background: ${(p) => (p.$active ? "linear-gradient(#eef4fa, #c9dbec)" : "linear-gradient(115deg, #d2dfec, #b0c4da 50%, #a4bbd4)")};
`;

const TaskStack = styled.div`
  display: flex;
  margin: 0 3px;
  &::after {
    content: "";
    width: 5px;
    border: 1px solid #4d5d74;
    border-left: 0;
    border-radius: 0 3px 3px 0;
    background: #c4d5e6;
  }
`;

const Tray = styled.div`
  margin-left: auto;
  display: flex;
  align-items: center;
  gap: 7px;
  color: #fff;
`;

const Clock = styled.time`
  width: 74px;
  text-align: center;
  font-size: 11px;
  line-height: 17px;
`;

const ShowDesktop = styled.button`
  width: 15px;
  height: 39px;
  margin-left: -4px;
  border: 1px solid #48525f;
  box-shadow: inset 1px 1px 0 #b9c4d2;
  background: linear-gradient(135deg, #6c7783, #3d4650 45%, #79889b);
`;

const redCross = (
  <>
    <circle cx="11" cy="11.500" r="4.500" fill="#dc3020" stroke="#fff" strokeWidth=".6" />
    <path d="M9 9.500l4 4M13 9.500l-4 4" stroke="#fff" strokeWidth="1.400" />
  </>
);

/* ---------- page ---------- */

const tabs: [string, number][] = [
  ["Home", 65],
  ["Insert", 53],
  ["Page Layout", 95],
  ["References", 82],
  ["Mailings", 76],
  ["Review", 62],
  ["View", 56],
];

export default function App() {
  return (
    <Page>
      <Global />
      <Header>
        <OfficeButton aria-label="Office">
          <Svg $s={39} viewBox="0 0 39 39">
            <defs>
              <radialGradient id="orb" cx=".5" cy=".35" r=".65">
                <stop offset="0" stopColor="#fff" />
                <stop offset=".7" stopColor="#dfe3ec" />
                <stop offset="1" stopColor="#a9b2c4" />
              </radialGradient>
            </defs>
            <circle cx="19.500" cy="19.500" r="18" fill="url(#orb)" stroke="#8592aa" />
            <g fill="none">
              <path d="M14 18.500h-2.500a2 2 0 0 1-2-2v-5a2 2 0 0 1 2-2h6a2 2 0 0 1 2 2V15" stroke="#df4b16" strokeWidth="3" />
              <path d="M22 16.500v-1a1 1 0 0 1 1-1h4a1 1 0 0 1 1 1V19a1 1 0 0 1-1 1h-2" stroke="#3a8ad8" strokeWidth="2" />
              <path d="M16 21.500h-3.500a2 2 0 0 0-2 2v4a2 2 0 0 0 2 2h4a2 2 0 0 0 2-2V26" stroke="#f2b51c" strokeWidth="2.600" />
              <path d="M21.500 25v3a1.500 1.500 0 0 0 1.500 1.500h4a1.500 1.500 0 0 0 1.500-1.500v-3a1.500 1.500 0 0 0-1.500-1.500h-2" stroke="#5aa52e" strokeWidth="2.600" />
            </g>
            <path d="M16 17h2v2h-2z" fill="#e88424" />
            <path d="M21 18h2v2h-2z" fill="#3a8ad8" />
            <path d="M17 22h2v2h-2z" fill="#f2b51c" />
            <path d="M21 22h2v2h-2z" fill="#5aa52e" />
          </Svg>
        </OfficeButton>
        <TitleBar>
          <Quick>
            <Svg viewBox="0 0 16 16">
              <path d="M1 2h13v13H2l-1-1z" fill="#3b4fb4" />
              <path d="M4 2h8v6H4z" fill="#f4f6fc" />
              <path d="M5 10h7v5H5z" fill="#dfe3f2" />
              <path d="M6 11h2v3H6z" fill="#22306e" />
            </Svg>
            <Svg viewBox="0 0 16 16">
              <path d="M5 6c4-4 10-1 5 7" fill="none" stroke="#3b6fd0" strokeWidth="3" />
              <path d="M1 2v8h8z" fill="#3b6fd0" />
            </Svg>
            <Caret />
            <Svg viewBox="0 0 16 16">
              <path d="M11 4c4 4 1 9-3 9S1 8 5 4" fill="none" stroke="#3b6fd0" strokeWidth="3" />
              <path d="M6 1h7v6z" fill="#3b6fd0" />
            </Svg>
          </Quick>
          <QuickMore aria-label="Customize">
            <Svg $s={8} viewBox="0 0 8 8">
              <path d="M1 1.500h6" stroke="#2a3e70" />
              <path d="M1 4h6L4 7z" fill="#2a3e70" />
            </Svg>
          </QuickMore>
          <DocTitle>Document1 - Microsoft Word</DocTitle>
          <ContextTitle>Picture Tools</ContextTitle>
          <WindowButtons>
            <button aria-label="Minimize">
              <Svg viewBox="0 0 16 16"><path d="M4 9h8v2H4z" fill="#6a7f9f" /></Svg>
            </button>
            <button aria-label="Restore">
              <Svg viewBox="0 0 16 16">
                <path d="M6.500 6V4.500h7v5H12M4.500 6.500h7v4h-7z" fill="none" stroke="#6a7f9f" />
              </Svg>
            </button>
            <button aria-label="Close">
              <Svg viewBox="0 0 16 16"><path d="M4 4l8 7M12 4l-8 7" stroke="#6a7f9f" strokeWidth="2" /></Svg>
            </button>
          </WindowButtons>
        </TitleBar>
        <LanguageBar right={105} />
        <Tabs>
          {tabs.map(([name, w]) => (
            <Tab key={name} $w={w} $on={name === "Insert"}>{name}</Tab>
          ))}
          <Tab $w={78} $context>Format</Tab>
          <TabHelp aria-label="Help">
            <Svg viewBox="0 0 16 16">
              <circle cx="8" cy="8" r="7" fill="#2f6fd8" stroke="#2a5cae" />
              <circle cx="8" cy="8" r="6" fill="none" stroke="#dcebff" />
              <path d="M6 6.500C6 4 10 4 10 6.300c0 1.400-2 1.400-2 3M8 10.500V12" fill="none" stroke="#fff" strokeWidth="1.500" />
            </Svg>
          </TabHelp>
        </Tabs>
      </Header>

      <Ribbon>
        <Group $w={100}>
          <GroupBody>
            <Stack>
              <Small icon={ic.cover} label="Cover Page" menu />
              <Small icon={ic.blank} label="Blank Page" />
              <Small icon={ic.pageBreak} label="Page Break" />
            </Stack>
          </GroupBody>
          <GroupName>Pages</GroupName>
        </Group>
        <Group $w={50}>
          <GroupBody>
            <Large icon={ic.table} label="Table" menu w={46} />
          </GroupBody>
          <GroupName>Tables</GroupName>
        </Group>
        <Group $w={225}>
          <GroupBody>
            <Large icon={ic.picture} label="Picture" w={44} />
            <Large icon={ic.clip} label="Clip" second="Art" w={40} />
            <Large icon={ic.shapes} label="Shapes" menu w={44} />
            <Large icon={ic.smart} label="SmartArt" w={48} />
            <Large icon={ic.chart} label="Chart" w={42} />
          </GroupBody>
          <GroupName>Illustrations</GroupName>
        </Group>
        <Group $w={114}>
          <GroupBody>
            <Stack>
              <Small icon={ic.link} label="Hyperlink" />
              <Small icon={ic.bookmark} label="Bookmark" />
              <Small icon={ic.cross} label="Cross-reference" />
            </Stack>
          </GroupBody>
          <GroupName>Links</GroupName>
        </Group>
        <Group $w={146}>
          <GroupBody>
            <Large icon={ic.headerPage} label="Header" menu w={44} />
            <Large icon={ic.footerPage} label="Footer" menu w={41} />
            <Large icon={ic.numberPage} label="Page" second="Number" menu w={55} />
          </GroupBody>
          <GroupName>Header &amp; Footer</GroupName>
        </Group>
        <Group $w={253}>
          <GroupBody>
            <Large icon={ic.textBox} label="Text" second="Box" menu w={42} />
            <Stack $w={93}>
              <Small icon={ic.quick} label="Quick Parts" menu />
              <Small icon={ic.wordArt} label="WordArt" menu />
              <Small icon={ic.dropCap} label="Drop Cap" menu dim />
            </Stack>
            <Stack>
              <Small icon={ic.sign} label="Signature Line" menu />
              <Small icon={ic.date} label="Date & Time" dim />
              <Small icon={ic.object} label="Object" menu />
            </Stack>
          </GroupBody>
          <GroupName>Text</GroupName>
        </Group>
        <Group $w={91}>
          <GroupBody>
            <Stack>
              <Small icon={ic.pi} label="Equation" menu dim />
              <Small icon={ic.omega} label="Symbol" menu dim />
            </Stack>
          </GroupBody>
          <GroupName>Symbols</GroupName>
        </Group>
      </Ribbon>

      <Work>
        <DocColumn>
          <RulerRow>
            <TabStop aria-label="Tab stop">
              <Svg $s={15} viewBox="0 0 15 15">
                <path d="M.5 .5h14v14H.5z" fill="#e8f0fb" stroke="#5f8bd0" />
                <path d="M5 4v6h6" fill="none" stroke="#2b3f63" strokeWidth="2" />
              </Svg>
            </TabStop>
            <HRuler>{marks(2, 82)}</HRuler>
          </RulerRow>
          <Gap />
          <PageRow>
            <VRuler>{marks(1, 41, true)}</VRuler>
            <Paper>
              <Report>
                <ReportTitle>
                  S101-H: Sổ theo dõi dự toán từ nguồn NSNN trong nước (Phần III) - Xem báo cáo
                  <ReportWindowButtons>
                    <FrameButton $w={31} aria-label="Minimize">
                      <Svg $s={12} viewBox="0 0 12 12"><path d="M.5 5.500h10v3H.5z" fill="#fff" stroke="#5a6b80" /></Svg>
                    </FrameButton>
                    <FrameButton $w={31} aria-label="Restore">
                      <Svg $s={12} viewBox="0 0 12 12">
                        <path d="M3.500 .5h8v7h-8zM.5 3.500h8v7h-8zM3.500 6.500h2v1h-2z" fill="#eef4fa" stroke="#5a6b80" />
                      </Svg>
                    </FrameButton>
                    <FrameButton $w={6} $red aria-label="Close" />
                  </ReportWindowButtons>
                </ReportTitle>
                <MenuBar>
                  <MenuItem $w={37}>Tệp</MenuItem>
                  <MenuItem $w={43}>Xem</MenuItem>
                  <MenuItem $w={72}>Di chuyển</MenuItem>
                  <MenuItem $w={57}>Tài liệu</MenuItem>
                  <MenuItem $w={60}>Trợ giúp</MenuItem>
                </MenuBar>
                <ToolRow>
                  {tools.map((t, i) =>
                    t === "|" ? (
                      <Divider key={i} />
                    ) : t === "zoom" ? (
                      <ZoomSelect key={i} aria-label="Zoom">
                        <option>100 %</option>
                      </ZoomSelect>
                    ) : (
                      <Tool key={i} $on={i === 10 || i === 18 || i === 22}>
                        <Svg viewBox="0 0 16 16">{t}</Svg>
                      </Tool>
                    )
                  )}
                  <Labelled icon={info} label="Tên tệp" w={68} />
                  <Labelled icon={calc} label="Máy tính" w={73} />
                  <Labelled icon={custom} label="Tùy chỉnh" w={80} />
                  <Divider />
                  <Labelled icon={floppy} label="Lưu tệp" w={70} />
                </ToolRow>
                <ToolRow $end>
                  <Labelled icon={pencil} label="Sửa mẫu" w={74} />
                  <Divider />
                  <Labelled icon={back} label="Lấy mẫu mặc định" w={124} />
                  <Divider />
                  <Labelled icon={horn} label="Phản hồi" w={74} />
                  <Divider />
                  <Labelled icon={power} label="Đóng" w={60} />
                </ToolRow>
                <ReportPaper>
                  <Line>23</Line>
                  <Line> </Line>
                  <BoldLine>. rút dự toán qua KBNN</BoldLine>
                  <Line>hí:   Ngân sách Tỉnh tự chủ</Line>
                  <Line>nh phí thường xuyên</Line>
                  <UnitLine>Đơn vị: Đồng</UnitLine>
                  <LedgerTable />
                </ReportPaper>
              </Report>
              <LanguageBar right={78} />
              <Handle />
            </Paper>
          </PageRow>
          <BottomScroll>
            <BottomArrow $w={65} aria-label="Scroll left">
              <Svg $s={8} viewBox="0 0 8 8"><path d="M5 0v8L1 4z" fill="#445a84" /></Svg>
            </BottomArrow>
            <BottomThumb>
              <Svg $s={8} viewBox="0 0 8 8"><path d="M.5 0v8M2.500 0v8M4.500 0v8M6.500 0v8" stroke="#7587a3" /></Svg>
            </BottomThumb>
            <BottomArrow $w={72} aria-label="Scroll right">
              <Svg $s={8} viewBox="0 0 8 8"><path d="M2 0v8l4-4z" fill="#445a84" /></Svg>
            </BottomArrow>
          </BottomScroll>
        </DocColumn>
        <SideScroll>
          <SplitBox />
          <SideButton $h={15} $framed aria-label="View ruler">
            <Svg $s={13} viewBox="0 0 13 13">
              <path d="M1 2l6 1 1 3 4-1v7H9L8 9 5 8 1 7z" fill="#fff" stroke="#5c6f92" />
              <path d="M3.500 4v1M5.500 5v1M8 10v1M10 10v1" stroke="#5c6f92" />
            </Svg>
          </SideButton>
          <SideButton $h={17} $track aria-label="Scroll up">
            <Svg $s={9} viewBox="0 0 9 9"><path d="M0 6.500L4.500 2 9 6.500z" fill="#445a84" /></Svg>
          </SideButton>
          <SideThumb>
            <Svg $s={8} viewBox="0 0 8 8"><path d="M0 .5h8M0 2.500h8M0 4.500h8M0 6.500h8" stroke="#7587a3" /></Svg>
          </SideThumb>
          <SideTrack />
          <SideButton $h={16} $track aria-label="Scroll down">
            <Svg $s={9} viewBox="0 0 9 9"><path d="M0 2.500L4.500 7 9 2.500z" fill="#445a84" /></Svg>
          </SideButton>
          <SideButton $h={17} aria-label="Previous page">
            <Svg $s={8} viewBox="0 0 8 8"><path d="M1 3.500L4 1l3 2.500zM1 6.500L4 4l3 2.500z" fill="#000" /></Svg>
          </SideButton>
          <SideButton $h={17} aria-label="Browse object">
            <Svg $s={8} viewBox="0 0 8 8"><circle cx="4" cy="4" r="3" fill="#ddd" stroke="#222" /></Svg>
          </SideButton>
          <SideButton $h={17} aria-label="Next page">
            <Svg $s={8} viewBox="0 0 8 8"><path d="M1 1.500h6L4 4zM1 4.500h6L4 7z" fill="#000" /></Svg>
          </SideButton>
        </SideScroll>
      </Work>

      <Status>
        <StatusCell $w={77} $pad={8}>Page: 1 of 1</StatusCell>
        <StatusCell $w={65} $pad={9}>Words: 0</StatusCell>
        <StatusCell $w={165} $pad={8}>
          <Svg viewBox="0 0 16 16">
            <path d="M0 9l4-4 4 2 4-1 4 4-5 4-4-2z" fill="#fff" stroke="#5b74b4" />
            <path d="M6 7l3 3 6-8" fill="none" stroke="#3a5cb8" strokeWidth="2" />
          </Svg>
          English (United States)
        </StatusCell>
        <StatusRight>
          <Views>
            {[
              <path key="p" d="M2.500 1.500h9v11h-9zM4 4.500h6M4 6.500h6M4 8.500h6M4 10.500h6" fill="#fff" stroke="#55606f" />,
              <path key="r" d="M1.500 2.500h4l1.500 1 1.500-1h4v8h-4l-1.500 1-1.500-1h-4zM7 3v9M3 5h2M3 7h2M9 5h2M9 7h2" fill="#fff" stroke="#55606f" />,
              <g key="w">
                <path d="M1.500 1.500h9v9h-9zM3 4.500h6M3 6.500h6" fill="#fff" stroke="#55606f" />
                <circle cx="10" cy="10" r="3.200" fill="#2f8a5a" stroke="#2b5a9a" />
              </g>,
              <path key="o" d="M2 2.500h7M5 4.500h7M5 6.500h7M7 8.500h5M3 10.500h9" stroke="#6b7890" />,
              <path key="d" d="M2 2.500h10M2 5.500h10M2 8.500h10M2 11.500h10" stroke="#55606f" />,
            ].map((drawing, i) => (
              <ViewButton key={i} $on={i === 0} aria-label={`View ${i + 1}`}>
                <Svg $s={14} viewBox="0 0 14 14">{drawing}</Svg>
              </ViewButton>
            ))}
          </Views>
          <ZoomLabel>100%</ZoomLabel>
          <button aria-label="Zoom out">
            <Svg viewBox="0 0 16 16">
              <circle cx="8" cy="8" r="7" fill="#e6effb" stroke="#5878ac" />
              <path d="M4 8h8" stroke="#3c5480" strokeWidth="2" />
            </Svg>
          </button>
          <ZoomRange type="range" aria-label="Zoom" defaultValue={50} />
          <button aria-label="Zoom in">
            <Svg viewBox="0 0 16 16">
              <circle cx="8" cy="8" r="7" fill="#e6effb" stroke="#5878ac" />
              <path d="M4 8h8M8 4v8" stroke="#3c5480" strokeWidth="2" />
            </Svg>
          </button>
        </StatusRight>
      </Status>

      <TaskBar>
        <Launcher $w={54} aria-label="Start">
          <Svg $s={38} viewBox="0 0 38 38">
            <defs>
              <radialGradient id="start" cx=".5" cy=".95" r=".9">
                <stop offset="0" stopColor="#5fe0f4" />
                <stop offset=".45" stopColor="#1d6296" />
                <stop offset="1" stopColor="#6d8aa6" />
              </radialGradient>
            </defs>
            <circle cx="19" cy="19" r="17.500" fill="url(#start)" stroke="#123a62" />
            <path d="M12 10c3-2 5-1 7 0l-2 8c-2-1-5-2-7 0z" fill="#ee5a28" />
            <path d="M20.500 10.500c3 1 5 1 9-.5l-2 8c-4 1.500-6 1.500-9 .5z" fill="#8cc63c" />
            <path d="M9.500 20c3-1.500 5-1 7 0l-2 8c-2-1.500-4-2-7-.5z" fill="#3f9ae4" />
            <path d="M18 20.500c3 1 5 1 9 0l-2 8c-4 1-6 1-9-.5z" fill="#fbc72e" />
          </Svg>
        </Launcher>
        <Launcher $w={70} aria-label="Internet Explorer">
          <Svg $s={34} viewBox="0 0 34 34">
            <path d="M30 19.500H14c0 6 7 6.500 8.500 3H29C25.500 32 8 32 8 18.500S29 5 30 19.500zM14 15.500h9c-.5-5-8.500-5-9 0z" fill="#1d80d6" stroke="#0c4c94" strokeWidth=".8" fillRule="evenodd" />
            <path d="M7 30c-8 2-4-12 7-20S34 0 30 8c0-4-6-2-13 3S4 26 7 30z" fill="#f5c22c" stroke="#c88a10" strokeWidth=".5" />
          </Svg>
        </Launcher>
        <Launcher $w={54} aria-label="Explorer">
          <Svg $s={34} viewBox="0 0 34 34">
            <path d="M1 5h8l2 2h17v3h4v20H1z" fill="#e7c765" stroke="#b99a3e" />
            <path d="M4 3h8v3H4zM12 5h8v3h-8zM20 6h9v3h-9z" fill="#f8f8f4" />
            <path d="M5 3h4v2H5z" fill="#2fa83c" />
            <path d="M13 5h4v2h-4z" fill="#d8402c" />
            <path d="M21 7h4v2h-4z" fill="#3a80d8" />
            <path d="M2 11h30v20H2z" fill="#f8e6a0" />
            <path d="M5 32v-8c0-3 2-4 4-4h16c3 0 5 1 5 4v8h-5v-6H10v6z" fill="#9fd4ee" stroke="#5aa5cf" />
          </Svg>
        </Launcher>
        <Launcher $w={68} aria-label="UniKey">
          <Svg $s={32} viewBox="0 0 32 32">
            <g fill="#f3f3f3" stroke="#9a9a9a">
              <rect x="1.500" y="3.500" width="14" height="12" rx="1" />
              <rect x="17.500" y="3.500" width="13" height="12" rx="1" />
              <rect x="9.500" y="15.500" width="14" height="12" rx="1" />
            </g>
            <g fill="#e01c1c" fontFamily="Liberation Sans" fontWeight="bold" fontSize="10">
              <text x="5" y="12">u</text>
              <text x="23" y="12">i</text>
              <text x="14" y="24">n</text>
            </g>
          </Svg>
        </Launcher>
        <TaskButton $w={59} aria-label="Chrome">
          <Svg $s={32} viewBox="0 0 32 32">
            <circle cx="16" cy="16" r="14.500" fill="#f9c62b" />
            <path d="M16 16L3.400 8.700A14.500 14.500 0 0 1 28.600 9H16z" fill="#dc4437" />
            <path d="M3.400 8.700A14.500 14.500 0 0 0 15 30.400l6.500-11-5.500-3z" fill="#2a9d58" />
            <path d="M28.600 9H16v7l5.500 4L15 30.400A14.500 14.500 0 0 0 28.600 9z" fill="#f9c62b" />
            <circle cx="16" cy="16" r="6.800" fill="#fff" />
            <circle cx="16" cy="16" r="5.300" fill="#4284f3" />
          </Svg>
        </TaskButton>
        <TaskStack>
          <TaskButton $w={54} aria-label="Accounting">
            <Svg $s={34} viewBox="0 0 34 34">
              <circle cx="17" cy="17" r="15.500" fill="#d93030" />
              <circle cx="17" cy="17" r="13" fill="none" stroke="#fff" strokeWidth="1.300" />
              <path d="M12.500 11l6 6-6 6-6-6zM21.500 11l6 6-6 6-6-6z" fill="none" stroke="#fff" strokeWidth="2.600" />
              <path d="M12.500 15l2 2-2 2-2-2zM21.500 15l2 2-2 2-2-2z" fill="#d93030" />
            </Svg>
          </TaskButton>
        </TaskStack>
        <TaskButton $w={59} $active aria-label="Word">
          <Svg $s={32} viewBox="0 0 32 32">
            <path d="M8 2h20v24H2V8z" fill="#dfe9f8" stroke="#3f6fc0" strokeWidth="2" />
            <path d="M2 8h6V2" fill="none" stroke="#3f6fc0" strokeWidth="1.500" />
            <path d="M10 7l18-3 3 23-20 3z" fill="#fff" stroke="#9fb2d0" />
            <path d="M12 10l2 9 3-8 2 8 3-10" fill="none" stroke="#23509e" strokeWidth="2.200" />
            <path d="M23 10h5M23 13h5M23 16h5M14 22l14-2M14 25l14-2" stroke="#2f62b8" strokeWidth="1.500" />
          </Svg>
        </TaskButton>
        <Tray>
          <Svg viewBox="0 0 16 16"><path d="M4 11l4-4 4 4z" fill="#fff" /></Svg>
          <Svg $s={17} viewBox="0 0 16 16">
            <path d="M5 4.500h10v7H5zM8 14h5M10.500 12v2" fill="#5c6b80" stroke="#fff" strokeWidth="1.300" />
            <path d="M1 1v4h4V1M3 5v9" fill="none" stroke="#fff" strokeWidth="1.400" />
          </Svg>
          <Svg $s={17} viewBox="0 0 16 16">
            <path d="M1 5h3l4-4v13l-4-4H1z" fill="#eee" stroke="#fff" />
            {redCross}
          </Svg>
          <Svg $s={17} viewBox="0 0 16 16">
            <path d="M2 1v14M3 2c4-2 5 2 11 0v7c-5 2-7-2-11 0z" fill="#eee" stroke="#fff" strokeWidth="1.400" />
            {redCross}
          </Svg>
          <Clock>
            8:35 AM
            <br />
            31/05/2018
          </Clock>
          <ShowDesktop aria-label="Show desktop" />
        </Tray>
      </TaskBar>
    </Page>
  );
}
